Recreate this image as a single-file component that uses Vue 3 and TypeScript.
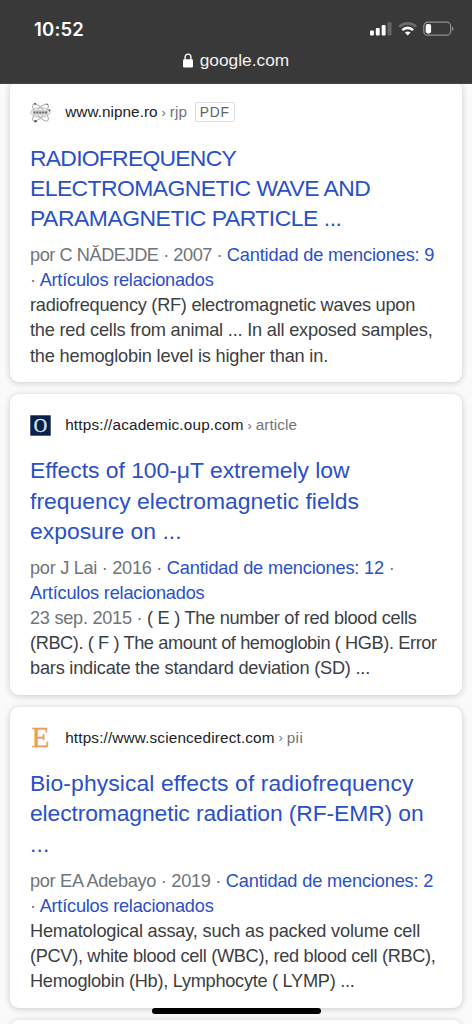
<script setup lang="ts">
type Tone = 'muted' | 'link' | 'text'
interface Segment { text: string; tone: Tone; width?: number }
interface Line { width: number; parts: Segment[] }
interface Result {
  icon: 'atom' | 'oxford' | 'elsevier'
  host: string
  hostWidth: number
  path: string
  pathWidth: number
  pdf?: boolean
  title: { text: string; width: number }[]
  body: Line[]
}

const seg = (text: string, tone: Tone, width?: number): Segment => ({ text, tone, width })
const line = (width: number, ...parts: Segment[]): Line => ({ width, parts })

const results: Result[] = [
  {
    icon: 'atom', host: 'www.nipne.ro', hostWidth: 92.5, path: 'rjp', pathWidth: 17.5, pdf: true,
    title: [
      { text: 'RADIOFREQUENCY', width: 206 },
      { text: 'ELECTROMAGNETIC WAVE AND', width: 341.5 },
      { text: 'PARAMAGNETIC PARTICLE ...', width: 311.5 },
    ],
    body: [
      line(404.5, seg('por C NĂDEJDE · 2007 · ', 'muted', 196.8), seg('Cantidad de menciones: 9', 'link', 207.5)),
      line(184.5, seg('·', 'muted'), seg(' Artículos relacionados', 'link')),
      line(385, seg('radiofrequency (RF) electromagnetic waves upon', 'text')),
      line(402.5, seg('the red cells from animal ... In all exposed samples,', 'text')),
      line(298, seg('the hemoglobin level is higher than in.', 'text')),
    ],
  },
  {
    icon: 'oxford', host: 'https://academic.oup.com', hostWidth: 178.5, path: 'article', pathWidth: 41.5,
    title: [
      { text: 'Effects of 100-μT extremely low', width: 320 },
      { text: 'frequency electromagnetic fields', width: 329 },
      { text: 'exposure on ...', width: 151.5 },
    ],
    body: [
      line(364, seg('por J Lai · 2016 · ', 'muted', 136.8), seg('Cantidad de menciones: 12', 'link', 217.2), seg(' ·', 'muted')),
      line(174.5, seg('Artículos relacionados', 'link')),
      line(387, seg('23 sep. 2015 · ', 'muted'), seg('( E ) The number of red blood cells', 'text')),
      line(407, seg('(RBC). ( F ) The amount of hemoglobin ( HGB). Error', 'text')),
      line(340, seg('bars indicate the standard deviation (SD) ...', 'text')),
    ],
  },
  {
    icon: 'elsevier', host: 'https://www.sciencedirect.com', hostWidth: 209.5, path: 'pii', pathWidth: 16.5,
    title: [
      { text: 'Bio-physical effects of radiofrequency', width: 383.5 },
      { text: 'electromagnetic radiation (RF-EMR) on', width: 393.5 },
      { text: '...', width: 19.5 },
    ],
    body: [
      line(405.5, seg('por EA Adebayo · 2019 · ', 'muted', 197.8), seg('Cantidad de menciones: 2', 'link', 207.5)),
      line(184.5, seg('·', 'muted'), seg(' Artículos relacionados', 'link')),
      line(390, seg('Hematological assay, such as packed volume cell', 'text')),
      line(405.5, seg('(PCV), white blood cell (WBC), red blood cell (RBC),', 'text')),
      line(324.5, seg('Hemoglobin (Hb), Lymphocyte ( LYMP) ...', 'text')),
    ],
  },
]

const ctx = document.createElement('canvas').getContext('2d')

function tracking(text: string, size: number, width?: number) {
  if (!ctx || !width) return {}
  ctx.font = `${size}px "Liberation Sans"`
  const natural = ctx.measureText(text).width
  return { letterSpacing: `${((width - natural) / text.length).toFixed(3)}px` }
}
const joined = (l: Line) => l.parts.map((p) => p.text).join('')
</script>

<template>
  <div class="phone">
    <header class="top">
      <div class="status">
        <span class="clock">10:52</span>
        <svg class="indicators" width="86" height="16" viewBox="0 0 86 16">
          <g fill="#fff">
            <rect x="0" y="9.6" width="3.9" height="4.9" rx="1" />
            <rect x="5.8" y="7" width="3.9" height="7.5" rx="1" />
            <rect x="11.7" y="3.9" width="3.9" height="10.6" rx="1" />
            <rect x="17.6" y="1.2" width="3.9" height="13.3" rx="1" fill="#656565" />
          </g>
          <g fill="none">
            <path d="M29.3 5.7a12.2 12.2 0 0 1 16.8 0" stroke="#6c6c6c" stroke-width="2.7" />
            <path d="M32.3 9.1a7.7 7.7 0 0 1 10.8 0" stroke="#fff" stroke-width="2.6" />
          </g>
          <path d="M34.9 11.6q2.8-2.2 5.6 0l-2.8 2.9z" fill="#fff" />
          <rect x="53.8" y="1.2" width="26.8" height="13" rx="3.8" fill="none" stroke="#929292" stroke-width="1.2" />
          <rect x="55.7" y="3" width="5.4" height="9.4" rx="1.8" fill="#fff" />
          <path d="M82 5.4q1.7.8 1.7 2.3t-1.7 2.3z" fill="#8a8a8a" />
        </svg>
      </div>
      <div class="address">
        <svg width="10" height="15" viewBox="0 0 10 15">
          <path d="M2.1 7V4a2.9 2.9 0 0 1 5.8 0v3" fill="none" stroke="#fff" stroke-width="1.4" />
          <rect x="0" y="6.2" width="10" height="8.3" rx="1.3" fill="#fff" />
        </svg>
        <span :style="tracking('google.com', 17.3, 89.5)">google.com</span>
      </div>
    </header>

    <main class="results">
      <article v-for="r in results" :key="r.host" class="card">
        <div class="source">
          <svg v-if="r.icon === 'atom'" class="favicon" viewBox="0 0 21 21">
            <g fill="none" stroke="#999" stroke-width="0.8">
              <ellipse cx="10.5" cy="10.5" rx="11" ry="4" transform="rotate(48 10.5 10.5)" />
              <ellipse cx="10.5" cy="10.5" rx="11" ry="4" transform="rotate(-48 10.5 10.5)" />
              <ellipse cx="10.5" cy="10.5" rx="9.6" ry="4.6" stroke="#aaa" />
            </g>
            <rect x="2.5" y="7.7" width="16" height="5.8" rx="1.5" fill="#d5d5d5" />
            <path d="M3.5 10.5h14" stroke="#666" stroke-width="2" stroke-dasharray="2 .9" />
            <g fill="#555">
              <circle cx="5" cy="1.7" r="1" /><circle cx="19.5" cy="8.2" r="1" />
              <circle cx="5.5" cy="19.2" r="1.2" /><circle cx="17" cy="2.5" r=".7" />
            </g>
          </svg>
          <svg v-else-if="r.icon === 'oxford'" class="favicon" viewBox="0 0 21 21">
            <rect x=".3" y=".3" width="20.4" height="20.4" fill="#07204c" />
            <text x="10.4" y="16.5" text-anchor="middle" class="serif" font-size="18.5" fill="#dce6ee" stroke="#dce6ee" stroke-width=".4">O</text>
          </svg>
          <svg v-else class="favicon" viewBox="0 0 21 21">
            <text x="10.4" y="20.3" text-anchor="middle" class="serif" font-size="30" textLength="18" lengthAdjust="spacingAndGlyphs" fill="#ed9d57" stroke="#ed9d57" stroke-width=".4">E</text>
          </svg>
          <span class="host" :style="tracking(r.host, 15.3, r.hostWidth)">{{ r.host }}</span>
          <span class="chevron">›</span>
          <span class="path" :style="tracking(r.path, 15.3, r.pathWidth)">{{ r.path }}</span>
          <span v-if="r.pdf" class="badge">PDF</span>
        </div>
        <h3 class="title">
          <span v-for="t in r.title" :key="t.text" :style="tracking(t.text, 22.9, t.width)">{{ t.text }}</span>
        </h3>
        <div class="body">
          <p v-for="(l, i) in r.body" :key="i" :style="tracking(joined(l), 18.2, l.width)"><span v-for="(p, j) in l.parts" :key="j" :class="p.tone" :style="tracking(p.text, 18.2, p.width)">{{ p.text }}</span></p>
        </div>
      </article>
      <div class="card"></div>
    </main>
    <div class="home-bar"></div>
  </div>
</template>

<style>
body {
  margin: 0;
  background: #fafafa;
}
</style>

<style scoped>
.phone {
  position: relative;
  width: 472px;
  height: 1024px;
  overflow: hidden;
  background: #fafafa;
  font-family: "Liberation Sans", Arial, sans-serif;
}
.top {
  position: relative;
  z-index: 1;
  box-sizing: border-box;
  height: 84px;
  background: #393939;
  border-bottom: 1px solid #454545;
  color: #fff;
}
.status {
  display: flex;
  justify-content: space-between;
  align-items: center;
  height: 48px;
  padding: 10px 16px 0 34px;
  box-sizing: border-box;
}
.clock {
  font-family: Inter, sans-serif;
  font-size: 18.5px;
  font-weight: 600;
  letter-spacing: 0.2px;
}
.address {
  display: flex;
  justify-content: center;
  align-items: center;
  gap: 7px;
  height: 25px;
  font-size: 17.3px;
  color: #f1f1f1;
}
.results {
  display: flex;
  flex-direction: column;
  gap: 11.75px;
  margin-top: -2.7px;
  padding: 0 10px;
}
.card {
  flex: none;
  box-sizing: border-box;
  height: 301px;
  padding: 17px 20px 0;
  border-radius: 9px;
  background: #fff;
  box-shadow: 0 1px 6px rgba(32, 33, 36, 0.22);
}
.source {
  display: flex;
  align-items: center;
  height: 28px;
  font-size: 15.3px;
  white-space: nowrap;
}
.favicon {
  flex: none;
  width: 21px;
  height: 21px;
  margin-right: 14.2px;
  overflow: visible;
}
.serif {
  font-family: "Liberation Serif", serif;
}
.host {
  color: #202124;
}
.chevron {
  width: 12px;
  text-align: center;
  font-size: 13px;
  color: #70757a;
}
.path {
  color: #70757a;
}
.badge {
  box-sizing: border-box;
  width: 40px;
  height: 20px;
  margin-left: 7.5px;
  border: 1px solid #dadce0;
  border-radius: 2px;
  color: #5f6368;
  font-size: 13.8px;
  line-height: 19px;
  text-align: center;
  letter-spacing: 0.7px;
}
.title {
  margin: 16.3px 0 9.5px;
  font-size: 22.9px;
  font-weight: 400;
  line-height: 30.3px;
  color: #2a50c8;
}
.title span {
  display: block;
  white-space: nowrap;
}
.body {
  font-size: 18.2px;
  line-height: 25.15px;
}
.body p {
  margin: 0;
  white-space: pre;
}
.muted {
  color: #70757a;
}
.link {
  color: #2a50c8;
}
.text {
  color: #3c4043;
}
.home-bar {
  position: absolute;
  left: 152px;
  top: 1007.5px;
  width: 169px;
  height: 6px;
  border-radius: 3px;
  background: #000;
}
</style>
